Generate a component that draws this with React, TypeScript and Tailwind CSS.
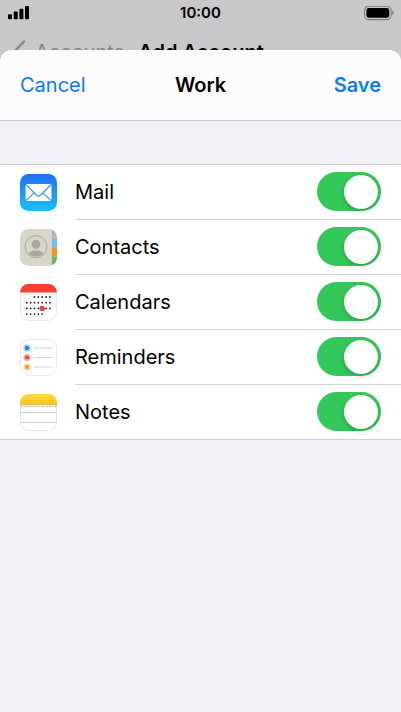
import { useState } from "react";
import type { ReactNode } from "react";

function SignalIcon() {
  return (
    <svg className="h-[14px] w-[22px]" viewBox="0 0 22 14" aria-hidden="true">
      <rect x="0" y="8.2" width="4" height="5" rx="1" />
      <rect x="5.7" y="5.6" width="4" height="7.6" rx="1" />
      <rect x="11.4" y="2.8" width="4" height="10.4" rx="1" />
      <rect x="17" y="0" width="4" height="13.2" rx="1" />
    </svg>
  );
}

function BatteryIcon() {
  return (
    <svg className="h-[15px] w-[30px]" viewBox="0 0 30 15" aria-hidden="true">
      <rect x="0.6" y="0.2" width="26.4" height="13.4" rx="4" fill="none" stroke="#7c7c7e" strokeWidth="1.1" />
      <rect x="2.4" y="2" width="22.8" height="9.8" rx="2.4" />
      <path d="M28.3 4.600v4.6c.9-.4 1.4-1.3 1.4-2.3s-.5-1.900-1.400-2.300z" fill="#7c7c7e" />
    </svg>
  );
}

function MailIcon() {
  return (
    <svg className="size-[37px]" viewBox="0 0 37 37" aria-hidden="true">
      <defs>
        <linearGradient id="mail-blue" x1="0" y1="0" x2="0" y2="1">
          <stop offset="0" stopColor="#1e6ff0" />
          <stop offset="1" stopColor="#19c0fb" />
        </linearGradient>
      </defs>
      <rect width="37" height="37" rx="8.500" fill="url(#mail-blue)" />
      <rect x="5.500" y="10" width="26" height="17" rx="2" fill="#fff" />
      <path d="M6.300 11l10.300 10.200q1.900 1.700 3.800 0L30.700 11M6.300 26.200l8-7.600M30.700 26.200l-8-7.600" fill="none" stroke="#3b9cf5" strokeWidth="1.200" />
    </svg>
  );
}

function ContactsIcon() {
  return (
    <svg className="size-[37px]" viewBox="0 0 37 37" aria-hidden="true">
      <defs>
        <clipPath id="contacts-tile">
          <rect width="37" height="37" rx="8.500" />
        </clipPath>
        <clipPath id="contacts-face">
          <circle cx="16" cy="17.600" r="10" />
        </clipPath>
      </defs>
      <g clipPath="url(#contacts-tile)">
        <rect width="37" height="37" fill="#d8d5cb" />
        <rect x="32" width="5" height="9.500" fill="#b9b6ad" />
        <rect x="32" y="9.500" width="5" height="9" fill="#5fc4f4" />
        <rect x="32" y="18.500" width="5" height="9" fill="#fb9614" />
        <rect x="32" y="27.500" width="5" height="10" fill="#53c64c" />
        <path d="M32.300 0v37" stroke="#a9a69d" strokeWidth="0.700" />
      </g>
      <circle cx="16" cy="17.600" r="11" fill="none" stroke="#aaa79d" strokeWidth="1" />
      <g clipPath="url(#contacts-face)" fill="#aaa79d">
        <ellipse cx="16" cy="15.300" rx="4.300" ry="4.600" />
        <ellipse cx="16" cy="26.500" rx="8.500" ry="5" />
      </g>
    </svg>
  );
}

const calendarRows = [
  { y: 13, from: 2 },
  { y: 18.700, from: 0 },
  { y: 24.400, from: 0 },
  { y: 30.100, from: 0, to: 5 },
];

function CalendarIcon() {
  return (
    <svg className="size-[37px]" viewBox="0 0 37 37" aria-hidden="true">
      <rect x="0.500" y="0.500" width="36" height="36" rx="8.500" fill="#fff" stroke="#e9e9e9" />
      <path d="M0 8.500A8.500 8.500 0 0 1 8.500 0h20A8.500 8.500 0 0 1 37 8.500z" fill="#fb3d33" />
      {calendarRows.map(({ y, from, to = 7 }) =>
        Array.from({ length: to - from }, (_, i) => (
          <circle key={`${y}-${i}`} cx={6.800 + (i + from) * 3.850} cy={y} r="0.900" fill="#222" />
        )),
      )}
      <circle cx="22.200" cy="24.400" r="2.700" fill="#fb3d33" />
    </svg>
  );
}

function RemindersIcon() {
  return (
    <svg className="size-[37px]" viewBox="0 0 37 37" aria-hidden="true">
      <rect x="0.500" y="0.500" width="36" height="36" rx="8.500" fill="#fff" stroke="#e9e9e9" />
      {[
        { y: 9, color: "#1c83f5" },
        { y: 18.500, color: "#f1493c" },
        { y: 28, color: "#f6a21e" },
      ].map(({ y, color }) => (
        <g key={y}>
          <circle cx="7" cy={y} r="3.200" fill="none" stroke={color} strokeWidth="0.700" opacity="0.700" />
          <circle cx="7" cy={y} r="2.300" fill={color} />
          <path d={`M13.500 ${y}h19`} stroke="#cfcfcf" strokeWidth="0.900" />
        </g>
      ))}
    </svg>
  );
}

function NotesIcon() {
  return (
    <svg className="size-[37px]" viewBox="0 0 37 37" aria-hidden="true">
      <defs>
        <linearGradient id="notes-yellow" x1="0" y1="0" x2="0" y2="1">
          <stop offset="0" stopColor="#fedb43" />
          <stop offset="1" stopColor="#f9c70d" />
        </linearGradient>
      </defs>
      <rect x="0.500" y="0.500" width="36" height="36" rx="8.500" fill="#fff" stroke="#e3e3e3" />
      <path d="M0 10.500V8.500A8.500 8.500 0 0 1 8.500 0h20A8.500 8.500 0 0 1 37 8.500v2z" fill="url(#notes-yellow)" />
      <path d="M0 10.700h37" stroke="#c4a84d" strokeWidth="0.700" />
      <path d="M1 12.500h35" stroke="#b5b5b5" strokeWidth="1.300" strokeDasharray="1.300 1.300" />
      <path d="M0.500 18.500h36M0.500 28.500h36" stroke="#cccccc" strokeWidth="0.900" />
    </svg>
  );
}

const services: { name: string; icon: ReactNode }[] = [
  { name: "Mail", icon: <MailIcon /> },
  { name: "Contacts", icon: <ContactsIcon /> },
  { name: "Calendars", icon: <CalendarIcon /> },
  { name: "Reminders", icon: <RemindersIcon /> },
  { name: "Notes", icon: <NotesIcon /> },
];

function ServiceRow({ name, icon }: { name: string; icon: ReactNode }) {
  const [on, setOn] = useState(true);
  return (
    <li className="group flex h-[55px] items-stretch pl-5 last:h-[54px]">
      <span className="flex w-[55px] shrink-0 items-center">{icon}</span>
      <label className="flex flex-1 items-start justify-between border-b border-[#d4d4d6] pt-[7px] pr-5 group-last:border-b-0">
        <span className="pt-[6px]">{name}</span>
        <input
          type="checkbox"
          role="switch"
          checked={on}
          onChange={(event) => setOn(event.target.checked)}
          className="flex h-[39px] w-16 appearance-none items-center rounded-full bg-[#e9e9eb] px-[3px] before:size-[34px] before:rounded-full before:bg-white before:shadow-[0_2px_5px_rgba(0,0,0,0.2)] checked:justify-end checked:bg-[#34c759]"
        />
      </label>
    </li>
  );
}

export default function App() {
  return (
    <div className="flex min-h-screen flex-col bg-[#c8c8ca] font-[Inter,'Liberation_Sans',sans-serif] text-black">
      <div className="grid h-[26px] shrink-0 grid-cols-3 items-center px-[7px]">
        <span className="pl-px">
          <SignalIcon />
        </span>
        <span className="text-center text-[15px] leading-5 font-semibold">10:00</span>
        <span className="flex justify-end">
          <BatteryIcon />
        </span>
      </div>
      <div className="flex h-6 shrink-0 items-start overflow-hidden px-3 pt-3 text-[20px] leading-7" aria-hidden="true">
        <svg className="mt-[2px] h-6 w-[14px]" viewBox="0 0 14 24" fill="none" stroke="#88888a" strokeWidth="2.500" strokeLinecap="round">
          <path d="M12 1.500L2 12l10 10.500" />
        </svg>
        <span className="ml-[9px] text-[#858587]">Accounts</span>
        <span className="ml-[14px] font-semibold">Add Account</span>
      </div>
      <main className="flex-1 rounded-t-xl bg-[#f1f0f6] text-[20px] leading-7">
        <header className="grid h-[71px] grid-cols-3 items-center rounded-t-xl border-b border-[#c6c6c8] bg-[#fcfcfc] px-5">
          <button type="button" className="justify-self-start text-[#0b7bf5]">
            Cancel
          </button>
          <h1 className="justify-self-center font-semibold">Work</h1>
          <button type="button" className="justify-self-end font-semibold text-[#0b7bf5]">
            Save
          </button>
        </header>
        <ul className="mt-[43px] border-y border-[#d0d0d4] bg-white">
          {services.map((service) => (
            <ServiceRow key={service.name} {...service} />
          ))}
        </ul>
      </main>
    </div>
  );
}
